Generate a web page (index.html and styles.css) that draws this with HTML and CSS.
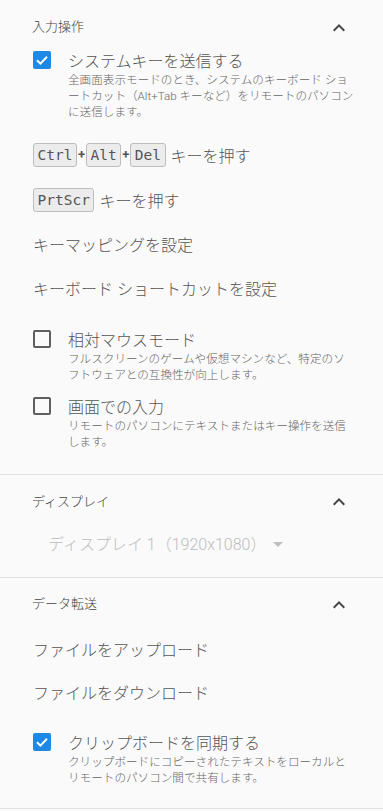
FILE: index.html
```html
<!DOCTYPE html>
<html lang="ja">
<head>
<meta charset="utf-8">
<link rel="stylesheet" href="styles.css">
</head>
<body>
<section class="panel panel-input">
  <div class="panel-header">
    <span class="panel-title">入力操作</span>
    <svg class="chevron" width="24" height="24" viewBox="0 0 24 24"><path d="M7.41 15.41L12 10.83l4.59 4.58L18 14l-6-6-6 6z"/></svg>
  </div>
  <div class="check-item">
    <span class="box checked"><svg width="18" height="18" viewBox="0 0 18 18"><polyline points="4,9.2 7.4,12.6 14,5.8"/></svg></span>
    <div class="check-text">
      <div class="check-title">システムキーを送信する</div>
      <div class="check-desc">全画面表示モードのとき、システムのキーボード ショートカット（Alt+Tab キーなど）をリモートのパソコンに送信します。</div>
    </div>
  </div>
  <div class="key-rows">
    <div class="key-row"><kbd>Ctrl</kbd><span class="plus">+</span><kbd>Alt</kbd><span class="plus">+</span><kbd>Del</kbd><span class="key-label">キーを押す</span></div>
    <div class="key-row"><kbd>PrtScr</kbd><span class="key-label">キーを押す</span></div>
    <div class="link-row">キーマッピングを設定</div>
    <div class="link-row">キーボード ショートカットを設定</div>
  </div>
  <div class="check-item spaced">
    <span class="box"></span>
    <div class="check-text">
      <div class="check-title">相対マウスモード</div>
      <div class="check-desc">フルスクリーンのゲームや仮想マシンなど、特定のソフトウェアとの互換性が向上します。</div>
    </div>
  </div>
  <div class="check-item spaced-sm">
    <span class="box"></span>
    <div class="check-text">
      <div class="check-title">画面での入力</div>
      <div class="check-desc">リモートのパソコンにテキストまたはキー操作を送信します。</div>
    </div>
  </div>
</section>
<section class="panel panel-display">
  <div class="panel-header">
    <span class="panel-title">ディスプレイ</span>
    <svg class="chevron" width="24" height="24" viewBox="0 0 24 24"><path d="M7.41 15.41L12 10.83l4.59 4.58L18 14l-6-6-6 6z"/></svg>
  </div>
  <div class="select">
    <span>ディスプレイ 1（1920x1080）</span>
    <svg class="drop" width="24" height="24" viewBox="0 0 24 24"><path d="M7 10l5 5 5-5z"/></svg>
  </div>
</section>
<section class="panel panel-transfer">
  <div class="panel-header short">
    <span class="panel-title">データ転送</span>
    <svg class="chevron" width="24" height="24" viewBox="0 0 24 24"><path d="M7.41 15.41L12 10.83l4.59 4.58L18 14l-6-6-6 6z"/></svg>
  </div>
  <div class="file-row">ファイルをアップロード</div>
  <div class="file-row">ファイルをダウンロード</div>
  <div class="check-item spaced">
    <span class="box checked"><svg width="18" height="18" viewBox="0 0 18 18"><polyline points="4,9.2 7.4,12.6 14,5.8"/></svg></span>
    <div class="check-text">
      <div class="check-title">クリップボードを同期する</div>
      <div class="check-desc">クリップボードにコピーされたテキストをローカルとリモートのパソコン間で共有します。</div>
    </div>
  </div>
</section>
</body>
</html>
```
FILE: styles.css
```css
html, body {
  margin: 0;
  padding: 0;
  background: #fafafa;
}
body {
  font-family: Roboto, "Noto Sans CJK JP", sans-serif;
  font-weight: 300;
  color: #555;
  width: 383px;
  height: 811px;
  overflow: hidden;
}
.panel {
  border-bottom: 1px solid #e2e2e2;
}
.panel-input { padding-bottom: 24px; }
.panel-display { padding-bottom: 16px; }
.panel-transfer { padding-bottom: 22px; }

.panel-header {
  height: 51px;
  display: flex;
  align-items: center;
  justify-content: space-between;
  padding: 0 32px;
}
.panel-display .panel-header { height: 50px; }
.panel-header.short { height: 49px; }
.panel-title {
  font-size: 13px;
  color: #444;
}
.chevron {
  fill: #444;
  margin-top: 4px;
}

.check-item {
  display: flex;
  padding-left: 33px;
}
.check-item.spaced { margin-top: 20px; }
.check-item.spaced-sm { margin-top: 14px; }
.box {
  flex: none;
  width: 18px;
  height: 18px;
  box-sizing: border-box;
  border: 2px solid #5f5f5f;
  border-radius: 2px;
}
.box.checked {
  border: none;
  background: #1e88e5;
}
.box svg {
  display: block;
}
.box polyline {
  fill: none;
  stroke: #fff;
  stroke-width: 2;
}
.check-text {
  margin-left: 17px;
  width: 287.5px;
}
.check-title {
  font-size: 16px;
  line-height: 21px;
  color: #555;
}
.check-desc {
  font-size: 11.6px;
  line-height: 16px;
  color: #666;
}

.key-rows {
  margin-top: 12px;
  padding-left: 33px;
}
.key-row {
  height: 45px;
  display: flex;
  align-items: center;
}
kbd {
  font-family: "DejaVu Sans Mono", monospace;
  font-weight: normal;
  font-size: 14.5px;
  line-height: 22px;
  padding: 0 3.5px;
  background: #ececec;
  border: 1px solid #bdbdbd;
  border-radius: 3px;
  color: #555;
}
.plus {
  font-size: 13px;
  font-weight: bold;
  color: #555;
  margin: 0 1px;
}
.key-label {
  font-size: 16px;
  margin-left: 5px;
}
.link-row {
  height: 44px;
  display: flex;
  align-items: center;
  font-size: 16px;
}

.select {
  height: 36px;
  display: flex;
  align-items: center;
  padding-left: 48px;
  font-size: 16px;
  color: #bdbdbd;
}
.drop {
  fill: #bdbdbd;
  margin-top: 1px;
}

.file-row {
  height: 43px;
  display: flex;
  align-items: center;
  padding-left: 33px;
  font-size: 16px;
}
```
